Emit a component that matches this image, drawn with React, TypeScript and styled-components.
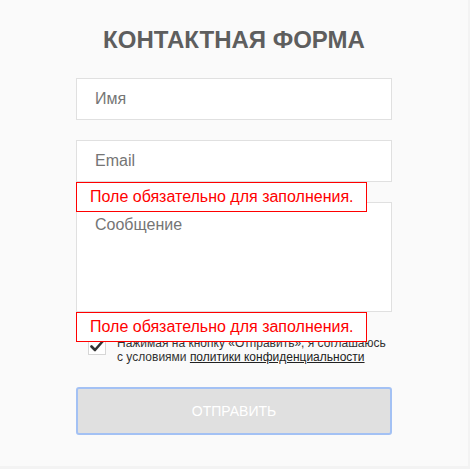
import styled, { createGlobalStyle } from 'styled-components'

const GlobalStyle = createGlobalStyle`
  html, body {
    margin: 0;
    padding: 0;
    background: #f3f3f3;
    font-family: Arial, 'Liberation Sans', sans-serif;
  }
`

const Page = styled.div`
  width: 468px;
  height: 466px;
  box-sizing: border-box;
  background: #fafafa;
  padding-top: 26px;
  display: flex;
  flex-direction: column;
  align-items: center;
`

const Title = styled.h2`
  margin: 0 0 24px;
  font-size: 24px;
  line-height: 28px;
  font-weight: bold;
  color: #5e5e5e;
  text-transform: uppercase;
`

const Form = styled.form`
  width: 316px;
  display: flex;
  flex-direction: column;
`

const Field = styled.div<{ $space?: number }>`
  position: relative;
  margin-bottom: ${(p) => p.$space ?? 20}px;
`

const Input = styled.input`
  display: block;
  width: 100%;
  height: 42px;
  box-sizing: border-box;
  border: 1px solid #e0e0e0;
  background: #fff;
  padding: 0 18px;
  font-family: inherit;
  font-size: 16px;
  color: #333;
  outline: none;

  &::placeholder {
    color: #757575;
  }
`

const TextArea = styled.textarea`
  display: block;
  width: 100%;
  height: 110px;
  box-sizing: border-box;
  border: 1px solid #e0e0e0;
  background: #fff;
  padding: 12px 18px;
  font-family: inherit;
  font-size: 16px;
  line-height: 20px;
  color: #333;
  resize: none;
  outline: none;

  &::placeholder {
    color: #757575;
  }
`

const Error = styled.div`
  position: absolute;
  top: 100%;
  left: 0;
  z-index: 2;
  width: 291px;
  height: 30px;
  box-sizing: border-box;
  border: 1px solid #ff0000;
  background: #fff;
  padding-left: 13px;
  font-size: 16px;
  line-height: 28px;
  color: #ff0000;
  white-space: nowrap;
`

const Agree = styled.label`
  display: flex;
  align-items: flex-start;
  gap: 11px;
  padding-left: 12px;
  margin-bottom: 23px;
  font-size: 12px;
  line-height: 14px;
  color: #333;
`

const Box = styled.span`
  flex: none;
  width: 18px;
  height: 18px;
  margin-top: 1px;
  box-sizing: border-box;
  border: 1px solid #d6d6d6;
  background: #fff;
  display: flex;
  align-items: center;
  justify-content: center;
`

const Policy = styled.a`
  color: #222;
  text-decoration: underline;
`

const Submit = styled.button`
  width: 100%;
  height: 48px;
  border: 2px solid #a3c1f4;
  border-radius: 3px;
  background: #e0e0e0;
  color: #fff;
  font-family: inherit;
  font-size: 14px;
  text-transform: uppercase;
  cursor: pointer;
`

export default function App() {
  const error = 'Поле обязательно для заполнения.'

  return (
    <>
      <GlobalStyle />
      <Page>
        <Title>Контактная форма</Title>
        <Form onSubmit={(e) => e.preventDefault()}>
          <Field>
            <Input placeholder="Имя" />
          </Field>
          <Field>
            <Input placeholder="Email" />
            <Error>{error}</Error>
          </Field>
          <Field $space={24}>
            <TextArea placeholder="Сообщение" />
            <Error>{error}</Error>
          </Field>
          <Agree>
            <Box>
              <svg width="14" height="12" viewBox="0 0 14 12">
                <path
                  d="M1.5 6.5 L5 10 L12.5 1.5"
                  fill="none"
                  stroke="#333"
                  strokeWidth="2.6"
                  strokeLinecap="round"
                  strokeLinejoin="round"
                />
              </svg>
            </Box>
            <span>
              Нажимая на кнопку «Отправить», я соглашаюсь
              <br />с условиями <Policy href="#">политики конфиденциальности</Policy>
            </span>
          </Agree>
          <Submit type="submit">Отправить</Submit>
        </Form>
      </Page>
    </>
  )
}
